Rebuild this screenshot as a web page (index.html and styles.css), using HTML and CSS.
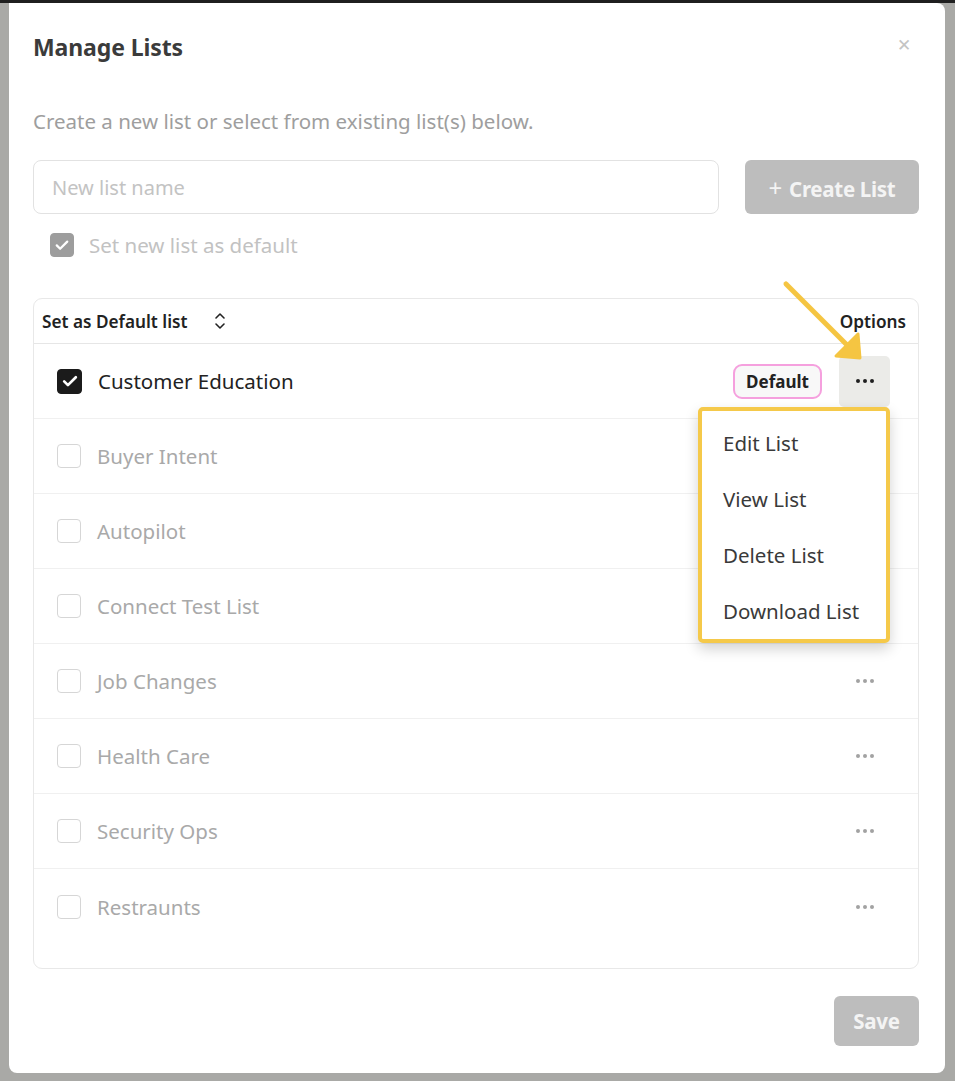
FILE: index.html
```html
<!DOCTYPE html>
<html>
<head>
<meta charset="utf-8">
<link rel="stylesheet" href="styles.css">
</head>
<body>
<div class="backdrop">
  <div class="modal">
    <div class="modal-head">
      <h1 class="title">Manage Lists</h1>
      <span class="close">&#x2715;</span>
    </div>
    <p class="subtitle">Create a new list or select from existing list(s) below.</p>
    <div class="create-row">
      <div class="input">New list name</div>
      <button class="btn btn-create"><span class="plus">+</span> Create List</button>
    </div>
    <label class="default-check">
      <span class="cb cb-gray"><svg viewBox="0 0 24 24" width="18" height="18"><path d="M5 12.5l4.5 4.5L19 7.5" fill="none" stroke="#fff" stroke-width="3" stroke-linecap="round" stroke-linejoin="round"/></svg></span>
      <span>Set new list as default</span>
    </label>

    <div class="table">
      <div class="thead">
        <div class="th-left">Set as Default list
          <svg class="sort" viewBox="0 0 12 20" width="12" height="20"><path d="M2 7l4-4 4 4M2 13l4 4 4-4" fill="none" stroke="#222" stroke-width="1.6" stroke-linecap="round" stroke-linejoin="round"/></svg>
        </div>
        <div class="th-right">Options</div>
      </div>
      <div class="row row-active">
        <span class="cb cb-dark"><svg viewBox="0 0 24 24" width="20" height="20"><path d="M5 12.5l4.5 4.5L19 7.5" fill="none" stroke="#fff" stroke-width="3.2" stroke-linecap="round" stroke-linejoin="round"/></svg></span>
        <span class="name">Customer Education</span>
        <span class="badge">Default</span>
        <span class="opt opt-active"><i></i><i></i><i></i></span>
        <div class="menu">
          <div class="menu-item">Edit List</div>
          <div class="menu-item">View List</div>
          <div class="menu-item">Delete List</div>
          <div class="menu-item">Download List</div>
        </div>
      </div>
      <div class="row"><span class="cb"></span><span class="name">Buyer Intent</span><span class="opt"><i></i><i></i><i></i></span></div>
      <div class="row"><span class="cb"></span><span class="name">Autopilot</span><span class="opt"><i></i><i></i><i></i></span></div>
      <div class="row"><span class="cb"></span><span class="name">Connect Test List</span><span class="opt"><i></i><i></i><i></i></span></div>
      <div class="row"><span class="cb"></span><span class="name">Job Changes</span><span class="opt"><i></i><i></i><i></i></span></div>
      <div class="row"><span class="cb"></span><span class="name">Health Care</span><span class="opt"><i></i><i></i><i></i></span></div>
      <div class="row"><span class="cb"></span><span class="name">Security Ops</span><span class="opt"><i></i><i></i><i></i></span></div>
      <div class="row row-last"><span class="cb"></span><span class="name">Restraunts</span><span class="opt"><i></i><i></i><i></i></span></div>
    </div>

    <div class="footer">
      <button class="btn btn-save">Save</button>
    </div>

    <svg class="arrow" viewBox="0 0 90 90" width="90" height="90">
      <line x1="6" y1="6" x2="72" y2="72" stroke="#f5c542" stroke-width="5" stroke-linecap="round"/>
      <path d="M56 78 L80 80 L78 56 Z" fill="#f5c542" stroke="#f5c542" stroke-width="3" stroke-linejoin="round"/>
    </svg>
  </div>
</div>
</body>
</html>
```
FILE: styles.css
```css
* { box-sizing: border-box; }
html, body { margin: 0; padding: 0; }
body {
  width: 955px;
  height: 1081px;
  overflow: hidden;
  background: #a9a9a6;
  font-family: "Noto Sans", "Open Sans", sans-serif;
}
.backdrop {
  border-top: 3px solid #1f1f1f;
  height: 1081px;
  padding-left: 9px;
}
.modal {
  position: relative;
  width: 936px;
  height: 1070px;
  background: #fff;
  border-radius: 0 8px 8px 8px;
  padding: 0 26px 0 24px;
}
.modal-head {
  display: flex;
  justify-content: space-between;
  align-items: center;
  padding-top: 30px;
  height: 58px;
}
.title {
  margin: 0;
  font-size: 23px;
  font-weight: 700;
  color: #3b3b3b;
  letter-spacing: -0.1px;
  line-height: 28px;
}
.close {
  color: #c4c4c4;
  font-size: 17px;
  margin-right: 8px;
  margin-top: -6px;
}
.subtitle {
  margin: 47px 0 0;
  font-size: 20.5px;
  line-height: 26px;
  color: #9e9e9e;
}
.create-row {
  display: flex;
  gap: 26px;
  margin-top: 26px;
}
.input {
  flex: 1;
  height: 54px;
  border: 1.5px solid #e2e2e2;
  border-radius: 8px;
  padding-left: 18px;
  display: flex;
  align-items: center;
  font-size: 20px;
  color: #c3c3c3;
}
.btn {
  border: none;
  background: #bdbdbd;
  color: #f4f4f4;
  font-family: inherit;
  font-weight: 700;
  font-size: 20.5px;
  border-radius: 6px;
  letter-spacing: -0.3px;
}
.btn-create {
  width: 174px;
  height: 54px;
}
.plus { font-weight: 400; font-size: 24px; margin-right: 2px; }
.default-check {
  display: flex;
  align-items: center;
  gap: 15px;
  margin-top: 17px;
  margin-left: 17px;
  font-size: 20.5px;
  color: #c2c2c2;
}
.cb {
  width: 24px;
  height: 24px;
  border-radius: 4px;
  border: 1.5px solid #d6d6d6;
  display: flex;
  align-items: center;
  justify-content: center;
  flex: none;
}
.cb-gray { background: #9d9d9d; border-color: #9d9d9d; }
.cb-dark { background: #1b1b1b; border-color: #1b1b1b; width: 25px; height: 25px; }

.table {
  position: relative;
  margin-top: 39px;
  border: 1.5px solid #e8e8e8;
  border-radius: 9px;
  height: 671px;
}
.thead {
  display: flex;
  justify-content: space-between;
  align-items: center;
  height: 45px;
  border-bottom: 1.5px solid #e6e6e6;
  padding: 0 12px 0 8px;
  font-size: 17.2px;
  font-weight: 600;
  color: #222;
}
.th-left { display: flex; align-items: center; }
.sort { margin-left: 27px; }
.row {
  position: relative;
  display: flex;
  align-items: center;
  height: 75px;
  border-bottom: 1.5px solid #f0f0f0;
  padding: 0 28px 0 23px;
}
.row-last { border-bottom: none; }
.name {
  flex: 1;
  margin-left: 16px;
  font-size: 20.5px;
  color: #a9a9a9;
}
.row-active .name { color: #222; }
.badge {
  height: 35px;
  width: 89px;
  border: 2px solid #f5a0de;
  border-radius: 9px;
  background: #f8f8f8;
  display: flex;
  align-items: center;
  justify-content: center;
  font-size: 17px;
  font-weight: 700;
  color: #222;
  margin-right: 17px;
}
.opt {
  width: 51px;
  height: 51px;
  display: flex;
  align-items: center;
  justify-content: center;
  gap: 3px;
}
.opt i {
  width: 4px;
  height: 4px;
  border-radius: 50%;
  background: #a2a2a2;
}
.opt-active {
  background: #ebebe8;
  border-radius: 5px;
}
.opt-active i { background: #1f1f1f; }

.menu {
  position: absolute;
  top: 63px;
  right: 28px;
  width: 192px;
  height: 236px;
  background: #fff;
  border: 4px solid #f5c94a;
  border-radius: 5px;
  box-shadow: 0 6px 14px rgba(0,0,0,0.18);
  padding: 21px 0 0 21px;
  z-index: 2;
}
.menu-item {
  height: 56px;
  font-size: 20.5px;
  line-height: 22px;
  color: #3a3a3a;
}

.footer {
  display: flex;
  justify-content: flex-end;
  margin-top: 27px;
}
.btn-save {
  width: 85px;
  height: 50px;
}
.arrow {
  position: absolute;
  left: 771px;
  top: 275px;
}
```
